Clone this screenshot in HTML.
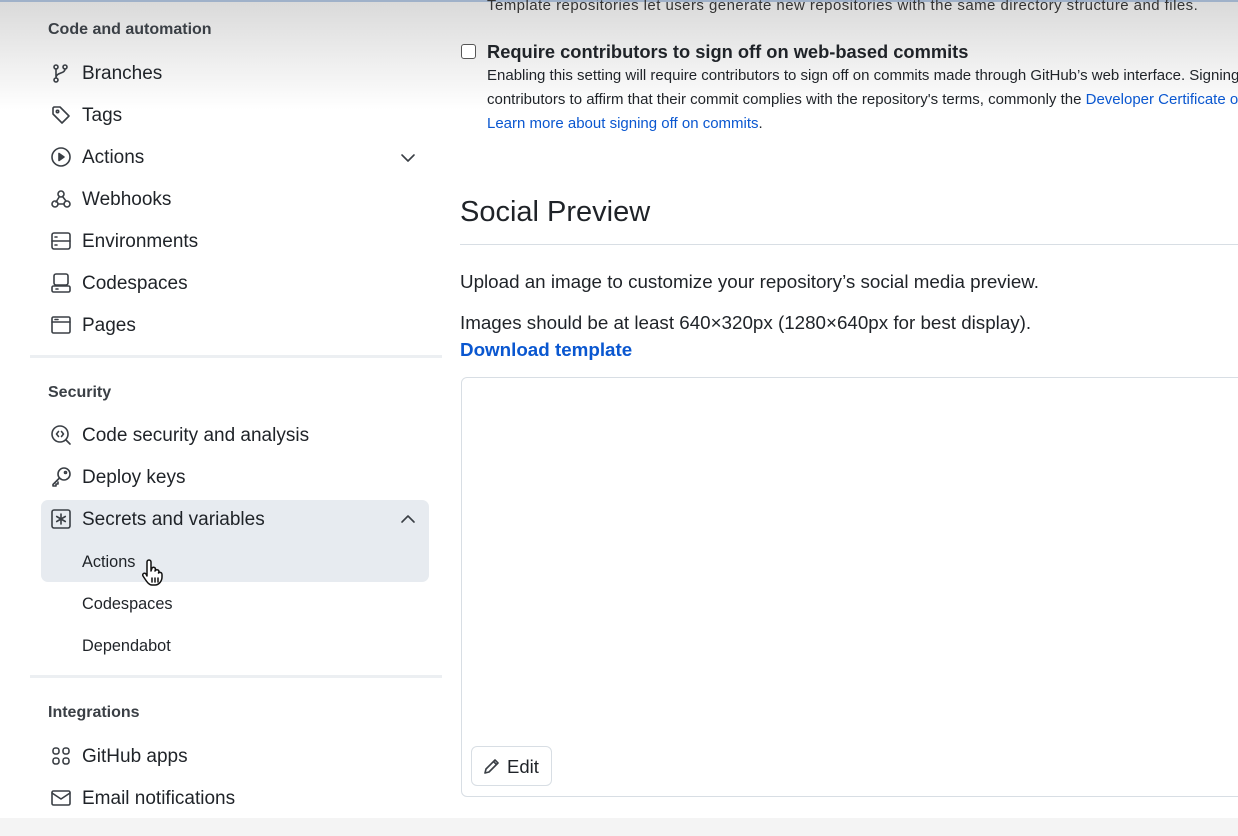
<!DOCTYPE html>
<html><head><meta charset="utf-8"><style>
*{margin:0;padding:0;box-sizing:border-box}
html,body{width:1238px;height:836px;overflow:hidden}
body{background:#fff;font-family:"Liberation Sans",sans-serif;color:#1f2328;position:relative}
#w{position:absolute;left:0;top:0;width:1238px;height:836px;overflow:hidden}
.topshade{position:absolute;left:0;top:0;width:1238px;height:110px;background:linear-gradient(#d9d9d9,#fff);}
.topline{position:absolute;left:0;top:0;width:1238px;height:2px;background:#9fb1c9}
.bot{position:absolute;left:0;top:818px;width:1238px;height:18px;background:#f4f4f4}
.a{position:absolute;white-space:nowrap}
.h{font-size:16px;font-weight:bold;color:#3a3f45}
.i{font-size:19px;color:#1f2328}
.s{font-size:16.3px;color:#1f2328}
.ic{position:absolute;width:22px;height:22px}
svg{fill:none;stroke:#3a3f45;stroke-width:1.6;stroke-linecap:round;stroke-linejoin:round}
.sep{position:absolute;left:30px;width:412px;height:3px;background:#eceff2}
.hl{position:absolute;left:41px;top:500px;width:388px;height:82px;background:#e7ebf0;border-radius:7px}
.t{font-size:15px;color:#1f2328}
.b{font-size:18.8px;color:#1f2328}
.blue{color:#0a57d0}
</style></head><body><div id="w">
<div class="topshade"></div><div class="topline"></div><div class="bot"></div>

<div class="a h" style="left:48px;top:21px">Code and automation</div>
<svg class="ic" style="left:50px;top:62px" viewBox="0 0 22 22"><circle cx="6" cy="5" r="2"/><circle cx="6" cy="18" r="2"/><circle cx="15" cy="5" r="2"/><path d="M6 7v9M15 7c0 5-9 3-9 9"/></svg>
<div class="a i" style="left:82px;top:63px">Branches</div>
<svg class="ic" style="left:50px;top:104px" viewBox="0 0 22 22"><path d="M3 4v6l9 9 7-7-9-9H4z"/><circle cx="7.5" cy="7.5" r="1.2"/></svg>
<div class="a i" style="left:82px;top:105px">Tags</div>
<svg class="ic" style="left:50px;top:146px" viewBox="0 0 22 22"><circle cx="11" cy="11" r="9"/><path d="M9 7.5v7l5-3.5z" fill="#3a3f45"/></svg>
<div class="a i" style="left:82px;top:147px">Actions</div>
<svg style="position:absolute;left:400px;top:152px" width="16" height="12" viewBox="0 0 16 12"><path d="M2 3l6 6 6-6"/></svg>
<svg class="ic" style="left:50px;top:188px" viewBox="0 0 22 22"><circle cx="11" cy="6" r="3"/><circle cx="5" cy="16" r="3"/><circle cx="17" cy="16" r="3"/><path d="M9.5 8.5L6 14M8 16h6M12.5 8.5L16 13"/></svg>
<div class="a i" style="left:82px;top:189px">Webhooks</div>
<svg class="ic" style="left:50px;top:230px" viewBox="0 0 22 22"><rect x="2" y="3" width="18" height="16" rx="2"/><path d="M2 11h18M5 7h2M5 15h2"/></svg>
<div class="a i" style="left:82px;top:231px">Environments</div>
<svg class="ic" style="left:50px;top:272px" viewBox="0 0 22 22"><rect x="4" y="2" width="14" height="11" rx="2"/><rect x="2" y="14" width="18" height="6" rx="1.5"/><path d="M6 17h2"/></svg>
<div class="a i" style="left:82px;top:273px">Codespaces</div>
<svg class="ic" style="left:50px;top:314px" viewBox="0 0 22 22"><rect x="2" y="3" width="18" height="16" rx="1.5"/><path d="M2 8h18M5 5.5h3"/></svg>
<div class="a i" style="left:82px;top:315px">Pages</div>

<div class="sep" style="top:355px"></div>

<div class="a h" style="left:48px;top:384px">Security</div>
<svg class="ic" style="left:50px;top:424px" viewBox="0 0 22 22"><circle cx="10" cy="10" r="8"/><path d="M16 16l4 4M8.5 7.5L6.5 10l2 2.5M11.5 7.5l2 2.5-2 2.5"/></svg>
<div class="a i" style="left:82px;top:425px">Code security and analysis</div>
<svg class="ic" style="left:50px;top:466px" viewBox="0 0 22 22"><circle cx="14" cy="8" r="6"/><path d="M9.5 12L3 18.5V20h3v-2h2v-2"/><circle cx="15.5" cy="6.5" r="1"/></svg>
<div class="a i" style="left:82px;top:467px">Deploy keys</div>

<div class="hl"></div>
<svg class="ic" style="left:50px;top:508px" viewBox="0 0 22 22"><rect x="2" y="2" width="18" height="18" rx="2"/><path d="M11 6v10M6.7 8.5l8.6 5M6.7 13.5l8.6-5"/></svg>
<div class="a i" style="left:82px;top:509px">Secrets and variables</div>
<svg style="position:absolute;left:400px;top:513px" width="16" height="12" viewBox="0 0 16 12"><path d="M2 9l6-6 6 6"/></svg>
<div class="a s" style="left:82px;top:553px">Actions</div>
<svg style="position:absolute;left:139px;top:558px;stroke:#111;stroke-width:1.5;fill:#fff" width="28" height="30" viewBox="0 0 28 30"><path d="M8 18V4a2 2 0 014 0v9l1-3a2 2 0 013.5 1l-.5 2 1-1a2 2 0 013 1.5l-.5 1.5.8-.5a2 2 0 012.7 2V19c0 4-3 8-7 8h-3c-3 0-5-3-7-6l-2-3a1.8 1.8 0 013-2z"/><path d="M13 20v4M16 20v4M19 20v4"/></svg>
<div class="a s" style="left:82px;top:595px">Codespaces</div>
<div class="a s" style="left:82px;top:637px">Dependabot</div>

<div class="sep" style="top:675px"></div>

<div class="a h" style="left:48px;top:704px">Integrations</div>
<svg class="ic" style="left:50px;top:745px" viewBox="0 0 22 22"><rect x="3" y="3" width="6" height="6" rx="2.5"/><rect x="13" y="3" width="6" height="6" rx="2.5"/><rect x="3" y="13" width="6" height="6" rx="2.5"/><rect x="13" y="13" width="6" height="6" rx="2.5"/></svg>
<div class="a i" style="left:82px;top:746px">GitHub apps</div>
<svg class="ic" style="left:50px;top:787px" viewBox="0 0 22 22"><rect x="2" y="4" width="18" height="14" rx="1.5"/><path d="M2 6l9 6 9-6"/></svg>
<div class="a i" style="left:82px;top:788px">Email notifications</div>

<div class="a t" style="left:487px;top:-3px;color:#333;letter-spacing:0.45px">Template repositories let users generate new repositories with the same directory structure and files.</div>
<div class="a" style="left:461px;top:44px;width:15px;height:15px;border:1.5px solid #555;border-radius:3px;background:#fff"></div>
<div class="a" style="left:487px;top:41px;font-size:18.3px;font-weight:bold">Require contributors to sign off on web-based commits</div>
<div class="a t" style="left:487px;top:67px">Enabling this setting will require contributors to sign off on commits made through GitHub’s web interface. Signing off is a way for</div>
<div class="a t" style="left:487px;top:91px">contributors to affirm that their commit complies with the repository's terms, commonly the <span class="blue">Developer Certificate of Origin</span></div>
<div class="a t blue" style="left:487px;top:115px">Learn more about signing off on commits<span style="color:#1f2328">.</span></div>

<div class="a" style="left:460px;top:196px;font-size:29px">Social Preview</div>
<div class="a" style="left:460px;top:244px;width:800px;height:1px;background:#d8dee4"></div>
<div class="a b" style="left:460px;top:271px">Upload an image to customize your repository’s social media preview.</div>
<div class="a b" style="left:460px;top:312px">Images should be at least 640×320px (1280×640px for best display).</div>
<div class="a b blue" style="left:460px;top:339px;font-weight:bold">Download template</div>
<div class="a" style="left:461px;top:377px;width:800px;height:420px;border:1px solid #d8dee4;border-radius:6px"></div>
<div class="a" style="left:471px;top:746px;width:81px;height:40px;border:1px solid #d8dee4;border-radius:6px;background:#fff"></div>
<svg style="position:absolute;left:482px;top:756px" width="20" height="20" viewBox="0 0 20 20"><path d="M3 17l1-4L13 4l3 3-9 9zM11.5 5.5l3 3"/></svg>
<div class="a b" style="left:507px;top:756px;font-size:18.5px">Edit</div>
</div></body></html>
